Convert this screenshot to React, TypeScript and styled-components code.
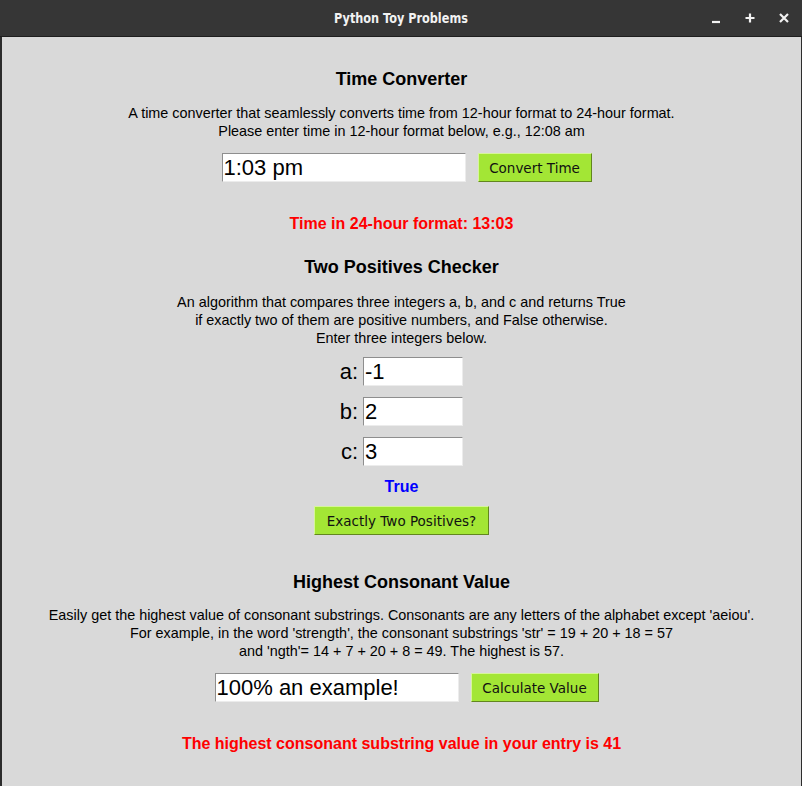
import React from "react";
import styled, { createGlobalStyle } from "styled-components";

const Global = createGlobalStyle`
  html, body { margin: 0; padding: 0; background: #d9d9d9; }
  body { width: 802px; height: 786px; overflow: hidden; }
  #root { width: 802px; height: 786px; }
`;

const Window = styled.div`
  width: 802px;
  height: 786px;
  display: flex;
  flex-direction: column;
  background: #d9d9d9;
  font-family: "Liberation Sans", Arial, sans-serif;
  color: #000;
`;

const TitleBar = styled.div`
  height: 36px;
  flex: none;
  background: #363636;
  border-bottom: 1px solid #1e1e1e;
  display: flex;
  align-items: center;
  justify-content: center;
  position: relative;
`;

const Title = styled.div`
  font-family: "DejaVu Sans", sans-serif;
  font-stretch: condensed;
  font-weight: bold;
  font-size: 13.5px;
  color: #f2f2f2;
  transform: scaleX(0.93);
`;

const Controls = styled.div`
  position: absolute;
  right: 12px;
  top: 0;
  height: 36px;
  display: flex;
  align-items: center;
  gap: 22px;
`;

const Ctrl = styled.svg`
  width: 12px;
  height: 12px;
  display: block;
  stroke: #f2f2f2;
  stroke-width: 2.2;
  fill: none;
`;

const Content = styled.div`
  flex: 1;
  border-left: 2px solid #2c2c2c;
  border-right: 1px solid #2c2c2c;
  display: flex;
  flex-direction: column;
  align-items: center;
  padding-top: 32px;
`;

const Heading = styled.div<{ $mt?: number }>`
  font-weight: bold;
  font-size: 18px;
  line-height: 21px;
  margin-top: ${(p) => p.$mt ?? 0}px;
  text-align: center;
`;

const Desc = styled.div<{ $mt?: number }>`
  font-size: 14.4px;
  line-height: 18px;
  margin-top: ${(p) => p.$mt ?? 0}px;
  text-align: center;
`;

const Row = styled.div<{ $mt?: number; $gap?: number; $shift?: number }>`
  display: flex;
  align-items: center;
  gap: ${(p) => p.$gap ?? 12}px;
  margin-top: ${(p) => p.$mt ?? 0}px;
  margin-left: ${(p) => p.$shift ?? 0}px;
`;

const Entry = styled.div<{ $w: number }>`
  box-sizing: border-box;
  width: ${(p) => p.$w}px;
  height: 29px;
  background: #fff;
  border-top: 1px solid #8e8e8e;
  border-left: 1px solid #8e8e8e;
  border-bottom: 1px solid #ececec;
  border-right: 1px solid #ececec;
  font-size: 22px;
  line-height: 27px;
  padding-left: 1px;
  white-space: nowrap;
  overflow: hidden;
`;

const Button = styled.div<{ $w: number }>`
  box-sizing: border-box;
  width: ${(p) => p.$w}px;
  height: 29px;
  background: #a3e635;
  border-top: 1px solid #d6f59a;
  border-left: 1px solid #d6f59a;
  border-bottom: 1px solid #62861f;
  border-right: 1px solid #62861f;
  display: flex;
  align-items: center;
  justify-content: center;
  font-family: "DejaVu Sans", sans-serif;
  font-size: 13.5px;
  color: #111;
`;

const Result = styled.div<{ $mt?: number; $color: string }>`
  font-weight: bold;
  font-size: 16px;
  line-height: 19px;
  color: ${(p) => p.$color};
  margin-top: ${(p) => p.$mt ?? 0}px;
  text-align: center;
`;

const Label = styled.div`
  font-size: 22px;
  width: 20px;
  text-align: right;
`;

export default function App() {
  return (
    <>
      <Global />
      <Window>
        <TitleBar>
          <Title>Python Toy Problems</Title>
          <Controls>
            <Ctrl viewBox="0 0 12 12">
              <path d="M2 10h8" />
            </Ctrl>
            <Ctrl viewBox="0 0 12 12">
              <path d="M6 1.5v9M1.5 6h9" />
            </Ctrl>
            <Ctrl viewBox="0 0 12 12">
              <path d="M2 2l8 8M10 2l-8 8" />
            </Ctrl>
          </Controls>
        </TitleBar>
        <Content>
          <Heading>Time Converter</Heading>
          <Desc $mt={14}>
            A time converter that seamlessly converts time from 12-hour format to 24-hour format.
            <br />
            Please enter time in 12-hour format below, e.g., 12:08 am
          </Desc>
          <Row $mt={13} $shift={10}>
            <Entry $w={244}>1:03 pm</Entry>
            <Button $w={114}>Convert Time</Button>
          </Row>
          <Result $mt={32} $color="#ff0000">Time in 24-hour format: 13:03</Result>

          <Heading $mt={24}>Two Positives Checker</Heading>
          <Desc $mt={15}>
            An algorithm that compares three integers a, b, and c and returns True
            <br />
            if exactly two of them are positive numbers, and False otherwise.
            <br />
            Enter three integers below.
          </Desc>
          <Row $mt={10} $gap={5} $shift={-2}>
            <Label>a:</Label>
            <Entry $w={100}>-1</Entry>
          </Row>
          <Row $mt={11} $gap={5} $shift={-2}>
            <Label>b:</Label>
            <Entry $w={100}>2</Entry>
          </Row>
          <Row $mt={11} $gap={5} $shift={-2}>
            <Label>c:</Label>
            <Entry $w={100}>3</Entry>
          </Row>
          <Result $mt={11} $color="#0000ff">True</Result>
          <Row $mt={10}>
            <Button $w={175}>Exactly Two Positives?</Button>
          </Row>

          <Heading $mt={37}>Highest Consonant Value</Heading>
          <Desc $mt={13}>
            Easily get the highest value of consonant substrings. Consonants are any letters of the alphabet except 'aeiou'.
            <br />
            For example, in the word 'strength', the consonant substrings 'str' = 19 + 20 + 18 = 57
            <br />
            and 'ngth'= 14 + 7 + 20 + 8 = 49. The highest is 57.
          </Desc>
          <Row $mt={13} $shift={10}>
            <Entry $w={244}>100% an example!</Entry>
            <Button $w={128}>Calculate Value</Button>
          </Row>
          <Result $mt={32} $color="#ff0000">
            The highest consonant substring value in your entry is 41
          </Result>
        </Content>
      </Window>
    </>
  );
}
